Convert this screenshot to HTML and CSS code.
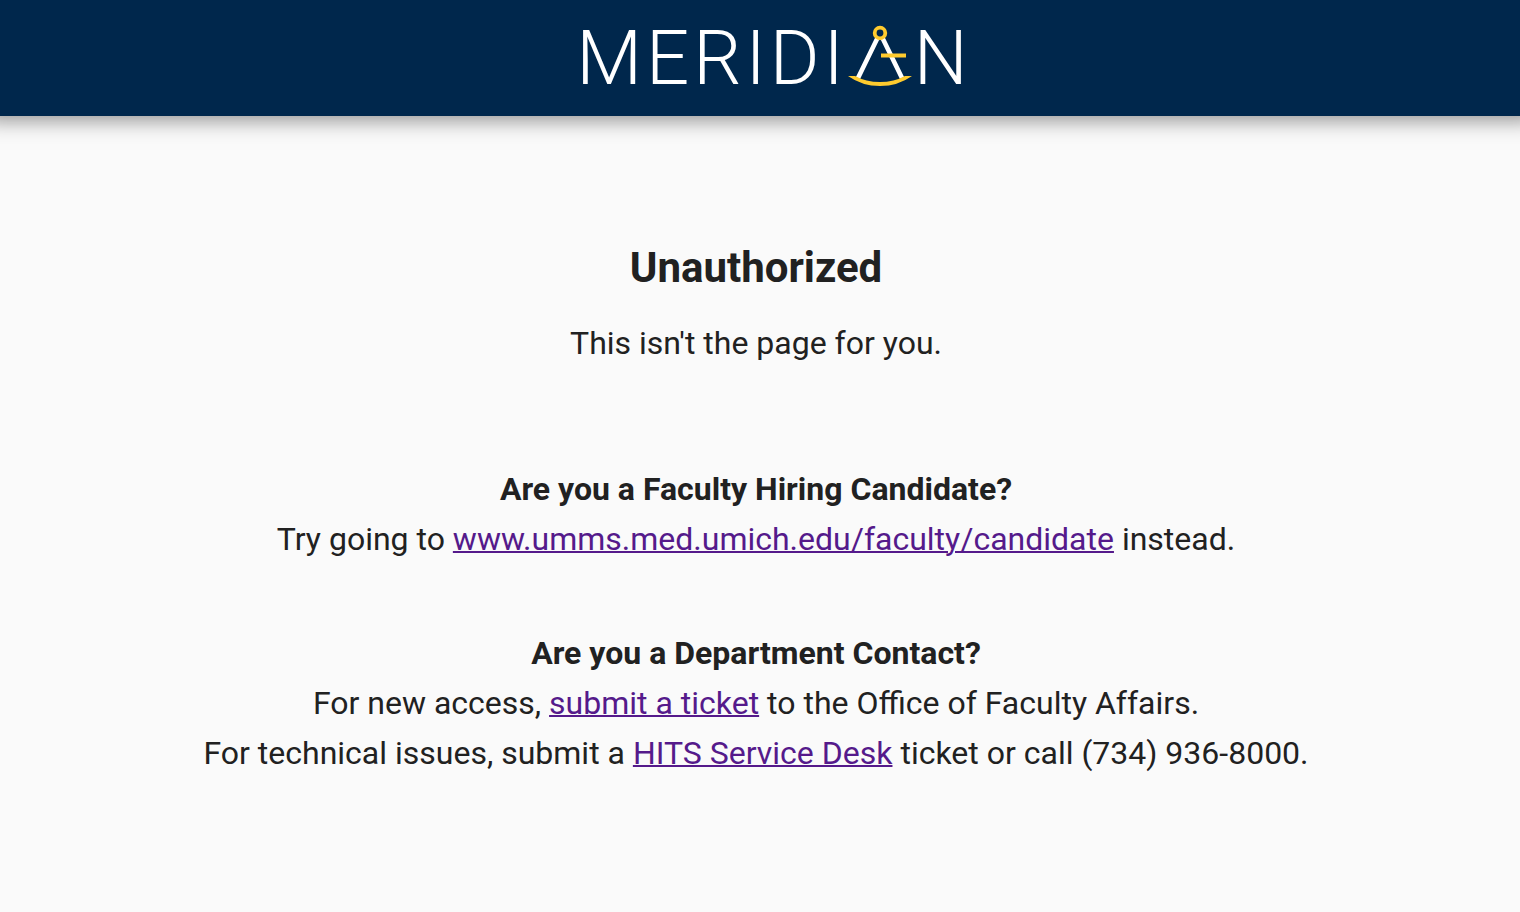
FILE: index.html
```html
<!DOCTYPE html>
<html lang="en">
<head>
  <meta charset="UTF-8">
  <meta name="viewport" content="width=device-width, initial-scale=1">
  <title>Meridian - Unauthorized</title>
  <link rel="stylesheet" href="styles.css">
</head>
<body>
  <header class="toolbar">
    <div class="logo" role="img" aria-label="Meridian">
      <span>MERIDI</span>
      <svg class="logo-mark" viewBox="0 0 64 62" width="64" height="62">
        <path d="M30 12 L10 53 M34 12 L54 53" fill="none" stroke="#fff" stroke-width="4.6"/>
        <path d="M33 30.5 H58" stroke="#ffcb2e" stroke-width="4"/>
        <circle cx="32" cy="8" r="5.3" fill="#00274c" stroke="#ffcb2e" stroke-width="3.8"/>
        <path d="M0 51 H7 Q18 57 32 57 Q46 57 57 51 H64 Q50 61 32 61 Q14 61 0 51 Z" fill="#ffcb2e"/>
      </svg>
      <span>N</span>
    </div>
  </header>

  <main class="content">
    <h1>Unauthorized</h1>
    <p>This isn't the page for you.</p>

    <section class="help candidate">
      <h2>Are you a Faculty Hiring Candidate?</h2>
      <p>Try going to <a href="#candidate">www.umms.med.umich.edu/faculty/candidate</a> instead.</p>
    </section>

    <section class="help">
      <h2>Are you a Department Contact?</h2>
      <p>For new access, <a href="#ticket">submit a ticket</a> to the Office of Faculty Affairs.</p>
      <p>For technical issues, submit a <a href="#hits">HITS Service Desk</a> ticket or call (734) 936-8000.</p>
    </section>
  </main>
</body>
</html>
```

FILE: styles.css
```css
html, body {
  margin: 0;
  padding: 0;
  min-height: 100%;
  background: #fafafa;
  color: #212121;
  font-family: Roboto, 'Helvetica Neue', sans-serif;
}

.toolbar {
  display: flex;
  justify-content: center;
  padding: 14px 0 14px 28px;
  background: #00274c;
  box-shadow: 0 -12px 20px 16px rgba(0, 0, 0, 0.44);
}

.logo {
  display: flex;
  align-items: center;
  color: #fff;
  font-size: 76px;
  font-weight: 300;
  line-height: 88px;
  letter-spacing: 4px;
}

.logo-mark {
  display: block;
  margin: 0 2px 4px 0;
}

.content {
  padding: 122px 24px 32px 16px;
  font-size: 32px;
  line-height: 50px;
  text-align: center;
}

h1 {
  margin: 0 0 20px;
  font-size: 42px;
  line-height: 60px;
  font-weight: 700;
}

h2 {
  margin: 0;
  font-size: 32px;
  line-height: 50px;
  font-weight: 700;
}

p {
  margin: 0;
}

.help {
  margin-top: 64px;
}

.candidate {
  margin-top: 96px;
}

a {
  color: #551a8b;
  text-decoration-thickness: 2px;
}
```
